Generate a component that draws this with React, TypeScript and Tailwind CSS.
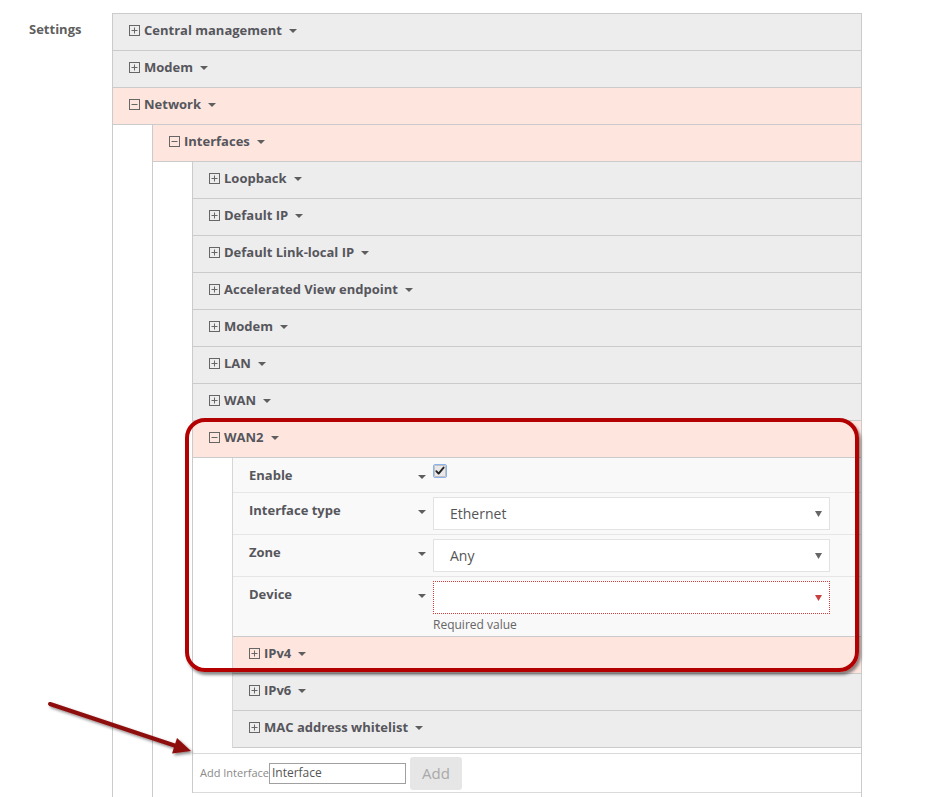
import React from "react";

const FONT = { fontFamily: '"Open Sans", "Noto Sans", Arial, sans-serif' };

function SquareIcon({ open }: { open: boolean }) {
  return (
    <svg width="11" height="11" viewBox="0 0 11 11" className="shrink-0">
      <rect x="0.5" y="0.5" width="10" height="10" fill="none" stroke="#666" strokeWidth="1" />
      <line x1="2.5" y1="5.5" x2="8.5" y2="5.5" stroke="#666" strokeWidth="1" />
      {!open && <line x1="5.5" y1="2.5" x2="5.5" y2="8.5" stroke="#666" strokeWidth="1" />}
    </svg>
  );
}

function Caret({ className = "" }: { className?: string }) {
  return (
    <svg width="8" height="4" viewBox="0 0 8 4" className={`shrink-0 ${className}`}>
      <polygon points="0,0 8,0 4,4" fill="#5e5e5e" />
    </svg>
  );
}

function Header({ label, open = false, pink }: { label: string; open?: boolean; pink?: boolean }) {
  const isPink = pink ?? open;
  return (
    <div
      className={`flex h-[37px] items-center border-b border-[#cbcbcb] pb-[4px] pl-[16px] ${
        isPink ? "bg-[#fee6df]" : "bg-[#ededed]"
      }`}
    >
      <SquareIcon open={open} />
      <span className="ml-[4px] text-[13px] font-bold leading-[18px] text-[#56565c]">{label}</span>
      <Caret className="ml-[7px] mt-[2px]" />
    </div>
  );
}

function Nest({ children, className = "" }: { children: React.ReactNode; className?: string }) {
  return <div className={`ml-[39px] border-l border-[#cbcbcb] ${className}`}>{children}</div>;
}

function FieldLabel({ label }: { label: string }) {
  return (
    <div className="flex h-[22px] w-[184px] shrink-0 items-center justify-between self-start pr-[7px] pt-[4px]">
      <span className="text-[13px] font-bold leading-[18px] text-[#56565c]">{label}</span>
      <Caret className="mt-[3px]" />
    </div>
  );
}

function Select({ value, error = false }: { value: string; error?: boolean }) {
  return (
    <div
      className={`flex h-[33px] w-[397px] items-center justify-between bg-white pl-[16px] pr-[7px] ${
        error ? "border border-dotted border-[#d63a3a]" : "border border-[#e2e2e2]"
      }`}
    >
      <span className="text-[14px] leading-[18px] text-[#555]">{value}</span>
      <svg width="7" height="6" viewBox="0 0 7 6">
        <polygon points="0,0 7,0 3.5,6" fill={error ? "#c94040" : "#666"} />
      </svg>
    </div>
  );
}

function Checkbox() {
  return (
    <svg width="14" height="14" viewBox="0 0 14 14">
      <rect x="0.5" y="0.5" width="13" height="13" rx="1.5" fill="#e4e4e4" stroke="#8cb1ec" strokeWidth="1" />
      <rect x="1.5" y="1.5" width="11" height="11" rx="1" fill="#e9e9e9" stroke="#a9a9a9" strokeWidth="0.6" />
      <path d="M3.3 7.2 L5.6 9.6 L10.6 3.6" fill="none" stroke="#222" strokeWidth="1.9" strokeLinecap="round" strokeLinejoin="round" />
    </svg>
  );
}

function Annotation() {
  return (
    <div className="pointer-events-none absolute left-[185px] top-[418px] h-[254px] w-[674px] rounded-[20px] border-[4px] border-[#b30000] shadow-[2px_3px_3px_rgba(0,0,0,0.45)]" />
  );
}

function Arrow() {
  return (
    <svg className="pointer-events-none absolute left-0 top-[680px]" width="210" height="100" viewBox="0 0 210 100">
      <defs>
        <filter id="sh" x="-20%" y="-50%" width="140%" height="200%">
          <feDropShadow dx="2" dy="2" stdDeviation="1.5" floodColor="#000" floodOpacity="0.45" />
        </filter>
      </defs>
      <g filter="url(#sh)">
        <line x1="50" y1="24" x2="176" y2="66" stroke="#8e0b0b" strokeWidth="4" strokeLinecap="round" />
        <polygon points="191,71 172,73.5 177,58" fill="#8e0b0b" />
      </g>
    </svg>
  );
}

export default function App() {
  return (
    <div className="relative h-[797px] w-[934px] overflow-hidden bg-white" style={FONT}>
      <div className="flex">
        <div className="w-[112px] shrink-0 pl-[29px] pt-[20px]">
          <span className="block text-[13px] font-bold leading-[18px] text-[#5f5f5f]">Settings</span>
        </div>
        <div className="mt-[13px] w-[750px] border-l border-r border-t border-[#cbcbcb] pb-[60px]">
          <Header label="Central management" />
          <Header label="Modem" />
          <Header label="Network" open />
          <Nest className="pb-[40px]">
            <Header label="Interfaces" open />
            <Nest>
              <Header label="Loopback" />
              <Header label="Default IP" />
              <Header label="Default Link-local IP" />
              <Header label="Accelerated View endpoint" />
              <Header label="Modem" />
              <Header label="LAN" />
              <Header label="WAN" />
              <Header label="WAN2" open />
              <div className="ml-[39px] border-l border-[#d6d6d6]">
                <div className="flex h-[35px] border-b border-[#e6e6e6] bg-[#f9f9f9] pl-[16px] pt-[4px]">
                  <FieldLabel label="Enable" />
                  <div className="pt-[2px]">
                    <Checkbox />
                  </div>
                </div>
                <div className="flex h-[42px] border-b border-[#e6e6e6] bg-[#f9f9f9] pl-[16px] pt-[4px]">
                  <FieldLabel label="Interface type" />
                  <Select value="Ethernet" />
                </div>
                <div className="flex h-[42px] border-b border-[#e6e6e6] bg-[#f9f9f9] pl-[16px] pt-[4px]">
                  <FieldLabel label="Zone" />
                  <Select value="Any" />
                </div>
                <div className="flex h-[60px] border-b border-[#cbcbcb] bg-[#f9f9f9] pl-[16px] pt-[4px]">
                  <FieldLabel label="Device" />
                  <div className="flex flex-col">
                    <Select value="" error />
                    <span className="mt-[3px] text-[12px] leading-[16px] text-[#666]">Required value</span>
                  </div>
                </div>
                <Header label="IPv4" pink />
                <Header label="IPv6" />
                <Header label="MAC address whitelist" />
              </div>
              <div className="mt-[5px] flex h-[40px] items-center border-b border-t border-[#dadada] pl-[7px]">
                <span className="text-[11px] leading-[16px] text-[#8a8a8a]">Add Interface</span>
                <div className="flex h-[21px] w-[137px] items-center border border-[#a0a0a0] bg-white pl-[2px]">
                  <span className="text-[12px] leading-[16px] text-[#555]">Interface</span>
                </div>
                <div className="ml-[4px] flex h-[33px] w-[52px] items-center justify-center rounded-[3px] bg-[#e6e6e6]">
                  <span className="text-[15px] leading-[18px] text-[#a9a9a9]">Add</span>
                </div>
              </div>
            </Nest>
          </Nest>
        </div>
      </div>
      <Annotation />
      <Arrow />
    </div>
  );
}
